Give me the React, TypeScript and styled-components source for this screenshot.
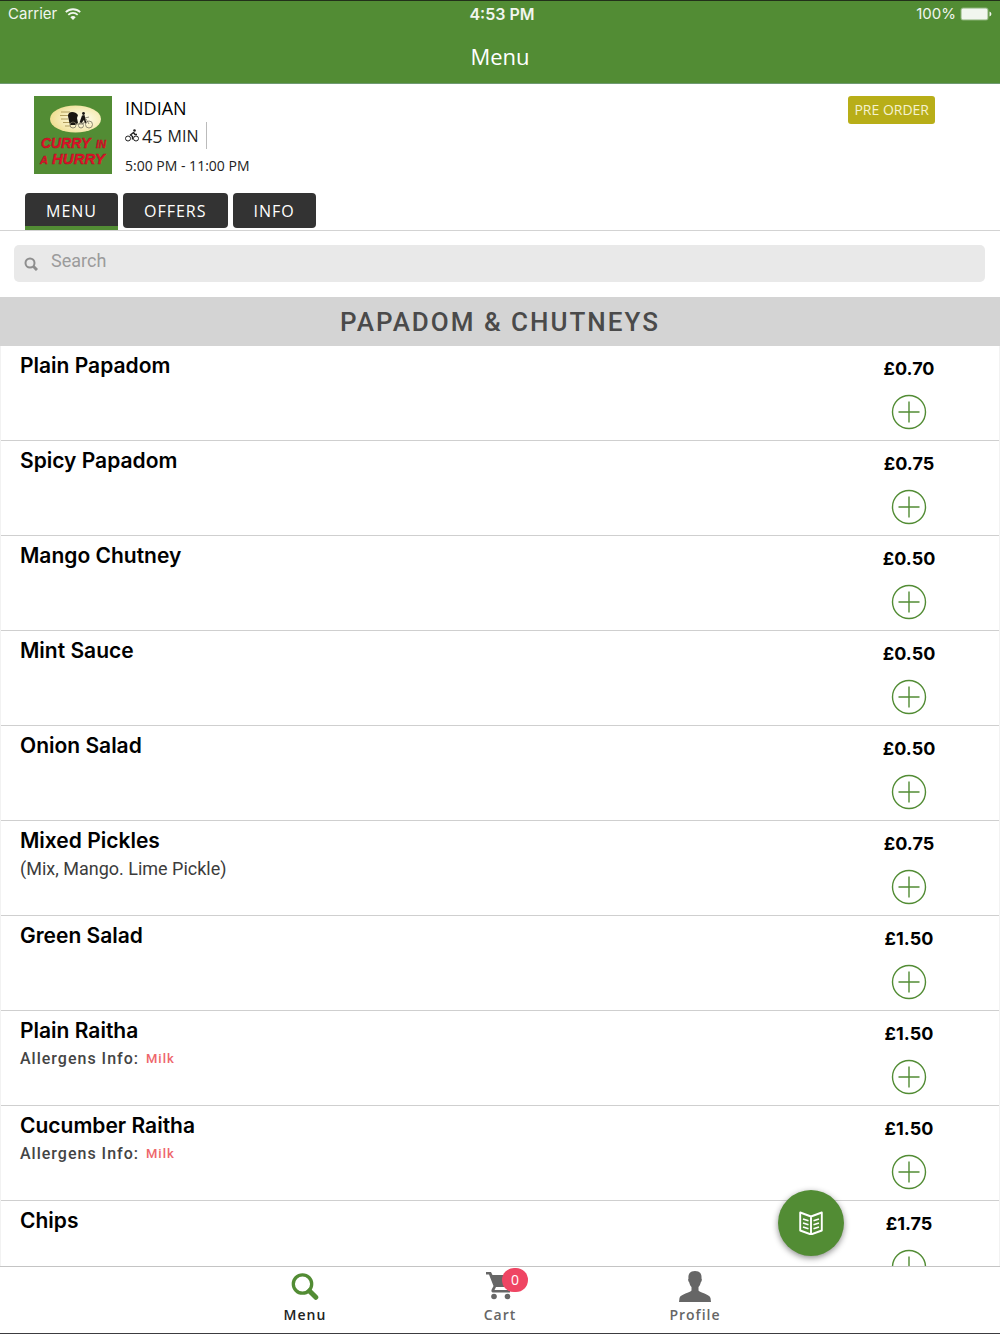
import React, { useState } from "react";
import styled, { createGlobalStyle } from "styled-components";

const green = "#528c34";
const openSans = '"Open Sans", "Noto Sans", sans-serif';
const inter = 'Inter, "Liberation Sans", sans-serif';
const roboto = 'Roboto, "Liberation Sans", sans-serif';

const GlobalStyle = createGlobalStyle`
  *, *::before, *::after { box-sizing: border-box; }
  body { margin: 0; background: #fff; color: #000; font-family: ${openSans}; }
  button, input { font: inherit; }
  h1, h2, h3, p, ul { margin: 0; padding: 0; }
`;

const Screen = styled.div`
  display: flex;
  flex-direction: column;
  height: 100vh;
  border-top: 1px solid #22301a;
  border-bottom: 1px solid #3c3c40;
`;

const TopBar = styled.header`
  flex: none;
  background: ${green};
  color: #fff;
  border-bottom: 1px solid #6f9a72;
`;

const StatusBar = styled.div`
  display: grid;
  grid-template-columns: 1fr auto 1fr;
  align-items: center;
  height: 26px;
  padding: 0 8px;
  font-family: ${inter};
  font-size: 15px;
  line-height: 20px;
  opacity: 0.92;
`;

const StatusSide = styled.div<{ $end?: boolean }>`
  display: flex;
  align-items: center;
  justify-content: ${(p) => (p.$end ? "flex-end" : "flex-start")};
  gap: ${(p) => (p.$end ? "4px" : "8px")};
`;

const Clock = styled.div`
  font-size: 16px;
  font-weight: 600;
  padding-left: 4px;
`;

const Title = styled.h1`
  height: 56px;
  padding-top: 14px;
  font-size: 22px;
  font-weight: 400;
  line-height: 30px;
  text-align: center;
`;

const Restaurant = styled.section`
  flex: none;
  display: flex;
  align-items: flex-start;
  padding: 12px 65px 0 34px;
`;

const Logo = styled.svg`
  flex: none;
  width: 78px;
  height: 78px;
  margin-right: 13px;
`;

const Details = styled.div`
  flex: 1;
  font-size: 14px;
  line-height: 20px;
  color: #222;
`;

const Cuisine = styled.h2`
  margin-bottom: 2px;
  font-size: 18px;
  font-weight: 400;
  line-height: 24px;
  color: #000;
`;

const Delivery = styled.p`
  display: flex;
  align-items: center;
  width: fit-content;
  height: 27px;
  padding-right: 7px;
  margin-bottom: 7px;
  border-right: 1px solid #bbb;
  font-size: 16px;
  line-height: 24px;
  gap: 5px;

  b {
    font-size: 18px;
    font-weight: 400;
  }
  svg {
    margin-right: -2px;
  }
`;

const PreOrder = styled.span`
  padding: 4px 6px;
  border-radius: 3px;
  background: #b8ae18;
  color: #f5f2cf;
  font-size: 14px;
  line-height: 20px;
`;

const Tabs = styled.nav`
  flex: none;
  display: flex;
  align-items: flex-start;
  gap: 5px;
  height: 55px;
  padding: 17px 25px 0;
  border-bottom: 1px solid #d3d3d3;
`;

const Tab = styled.button<{ $active: boolean }>`
  display: flex;
  height: ${(p) => (p.$active ? "37px" : "35px")};
  padding: 0 21px;
  border: 0;
  border-radius: ${(p) => (p.$active ? "4px 4px 0 0" : "4px")};
  background: #333;
  box-shadow: ${(p) => (p.$active ? `inset 0 -4px ${green}` : "none")};
  color: #fff;
  font-size: 16px;
  line-height: 36px;
  letter-spacing: 1px;
`;

const SearchBox = styled.label`
  flex: none;
  display: flex;
  align-items: center;
  gap: 13px;
  height: 37px;
  margin: 14px 15px 15px 14px;
  padding: 0 10px;
  border-radius: 5px;
  background: #e9e9e9;
`;

const SearchInput = styled.input`
  flex: 1;
  height: 32px;
  padding: 0 0 6px;
  border: 0;
  outline: 0;
  background: transparent;
  font-family: ${roboto};
  font-size: 18px;
  &::placeholder { color: #9b9b9b; opacity: 1; }
`;

const Section = styled.section`
  flex: 1;
  min-height: 0;
  overflow-y: auto;
  scrollbar-width: none;
`;

const SectionTitle = styled.h2`
  height: 49px;
  background: #d4d4d4;
  color: #4a4a4a;
  font-family: ${roboto};
  font-size: 26px;
  font-weight: 500;
  line-height: 50px;
  letter-spacing: 2px;
  text-align: center;
`;

const Items = styled.ul`
  list-style: none;
  border-left: 1px solid #f2f2f2;
  border-right: 1px solid #f2f2f2;
`;

const Item = styled.li`
  display: flex;
  justify-content: space-between;
  height: 95px;
  padding: 0 50px 0 19px;
  border-bottom: 1px solid #cfcfcf;
`;

const ItemInfo = styled.div`
  padding-top: 7px;
`;

const ItemName = styled.h3`
  font-family: ${inter};
  font-size: 21px;
  font-weight: 600;
  line-height: 26px;
`;

const Description = styled.p`
  color: #3c3c3c;
  font-family: ${roboto};
  font-size: 18px;
  line-height: 30px;
`;

const Allergens = styled.p`
  display: flex;
  gap: 7px;
  color: #444;
  font-family: ${roboto};
  font-size: 16px;
  font-weight: 500;
  line-height: 30px;
  letter-spacing: 1px;
`;

const Allergen = styled.span`
  color: #ee666b;
  font-size: 13px;
`;

const Purchase = styled.div`
  display: flex;
  flex-direction: column;
  align-items: center;
  width: 80px;
  padding-top: 11px;
  font-family: ${inter};
  font-size: 18px;
  font-weight: 700;
  line-height: 24px;
`;

const AddButton = styled.button`
  display: flex;
  margin-top: 13px;
  padding: 0;
  border: 0;
  background: none;
  color: ${green};
`;

const Bottom = styled.footer`
  position: relative;
  flex: none;
  height: 67px;
  border-top: 1px solid #c4c4c4;
  background: #fff;
`;

const BottomNav = styled.nav`
  display: flex;
  justify-content: center;
  gap: 110px;
`;

const NavItem = styled.a<{ $active?: boolean }>`
  display: flex;
  flex-direction: column;
  align-items: center;
  width: 85px;
  padding-top: 4px;
  color: ${(p) => (p.$active ? "#222" : "#666")};
  font-size: 14px;
  font-weight: 600;
  line-height: 20px;
  letter-spacing: 1px;
  text-decoration: none;
`;

const NavIcon = styled.span<{ $active?: boolean }>`
  position: relative;
  display: flex;
  height: 34px;
  color: ${(p) => (p.$active ? green : "#666")};
`;

const Badge = styled.span`
  position: absolute;
  top: -3px;
  left: 17px;
  min-width: 26px;
  border-radius: 12px;
  background: #ef4563;
  color: #fff;
  font-weight: 400;
  line-height: 24px;
  letter-spacing: 0;
  text-align: center;
`;

const MenuFab = styled.button`
  position: absolute;
  right: 156px;
  bottom: 77px;
  display: flex;
  align-items: center;
  justify-content: center;
  width: 66px;
  height: 66px;
  padding: 0;
  border: 0;
  border-radius: 50%;
  background: ${green};
  color: #fff;
  box-shadow: 0 2px 6px rgba(0, 0, 0, 0.45);
`;

function CurryLogo() {
  return (
    <Logo viewBox="0 0 78 78" role="img" aria-label="Curry in a Hurry">
      <defs>
        <radialGradient id="plate" cx="0.62" cy="0.5" r="0.6">
          <stop offset="0" stopColor="#fffef2" />
          <stop offset="0.55" stopColor="#f8efc0" />
          <stop offset="1" stopColor="#efdf94" />
        </radialGradient>
      </defs>
      <rect width="78" height="78" fill={green} />
      <ellipse cx="41.500" cy="23" rx="25.500" ry="13.500" fill="url(#plate)" />
      <path d="M27 16h9M26 19.500h9M27 23h7M29 26.500h7M31 30h6" stroke="#a08a48" strokeWidth="0.800" />
      <g fill="#1a1712">
        <path d="M34 20c0-4 4-5 8-3l2 2-1 3 1 5-3 2h-5l-1-4z" />
        <circle cx="49.500" cy="17.500" r="1.400" />
        <path d="M48 19.500l2.500-.5 1 4 1 4-1.500.5-1.500-3.500-1.500 3-2.500-.5z" />
      </g>
      <g fill="none" stroke="#77725f" strokeWidth="0.800">
        <circle cx="39" cy="29" r="3" />
        <circle cx="47" cy="29.500" r="2.500" />
        <circle cx="55" cy="28.500" r="3.500" />
        <path d="M42 28h7l3-5 3 5M51 22l4-1" />
      </g>
      <g
        fill="#e8102c"
        stroke="#a8141c"
        strokeWidth="0.500"
        fontFamily='"Liberation Sans", Arial, sans-serif'
        fontWeight="700"
        fontStyle="italic"
      >
        <text x="7" y="52" fontSize="14">CURRY</text>
        <text x="62" y="52" fontSize="10">IN</text>
        <text x="6" y="68" fontSize="11">A</text>
        <text x="18" y="68" fontSize="15">HURRY</text>
      </g>
    </Logo>
  );
}

const WifiIcon = () => (
  <svg width="16" height="12" viewBox="0 0 16 12" fill="none" stroke="currentColor" strokeWidth="1.800" aria-hidden="true">
    <path d="M0.800 4.200a10.300 10.300 0 0 1 14.400 0M3.300 6.900a6.700 6.700 0 0 1 9.400 0" />
    <path d="M8 12L5.300 9.200a3.900 3.900 0 0 1 5.400 0z" fill="currentColor" stroke="none" />
  </svg>
);

const BatteryIcon = () => (
  <svg width="32" height="14" viewBox="0 0 32 14" aria-hidden="true">
    <rect x="0.500" y="0.500" width="28" height="13" rx="2.500" fill="#8fb57c" />
    <rect x="1.500" y="1.500" width="26" height="11" rx="1.500" fill="#fff" />
    <path d="M29.500 4.500c2.500 1 2.500 4 0 5z" fill="#fff" />
  </svg>
);

const BikeIcon = () => (
  <svg width="14" height="13" viewBox="0 0 14 13" fill="none" stroke="#222" aria-hidden="true">
    <circle cx="3" cy="9.500" r="2.500" />
    <circle cx="11" cy="9.500" r="2.500" />
    <path d="M8.500 3.500L5.500 6l2 1.500v3M8.500 3.500l1.500 2h2" strokeWidth="1.400" />
    <circle cx="9.500" cy="1.500" r="1.300" fill="#222" stroke="none" />
  </svg>
);

const MagnifierIcon = () => (
  <svg width="28" height="30" viewBox="0 -2 28 30" fill="none" stroke="currentColor" aria-hidden="true">
    <circle cx="11.500" cy="11" r="9.200" strokeWidth="3.300" />
    <path d="M18.500 18l6.300 6.300" strokeWidth="5" strokeLinecap="round" />
  </svg>
);

const PlusCircle = () => (
  <svg width="36" height="36" viewBox="0 0 36 36" fill="none" stroke="currentColor" strokeWidth="1.400" aria-hidden="true">
    <circle cx="18" cy="18" r="16.500" />
    <path d="M18 7.500v21M7.500 18h21" />
  </svg>
);

const CartIcon = () => (
  <svg width="30" height="30" viewBox="0 0 30 30" fill="currentColor" aria-hidden="true">
    <path d="M1 1h5l1.500 3H26v7l-3 5H11l-1.500 3H25v2.500H8.500C6.500 21.500 6 20 6.700 18.500L8.500 15 4 3.500H1z" />
    <circle cx="9" cy="25.500" r="2.800" />
    <circle cx="22.500" cy="25.500" r="2.800" />
  </svg>
);

const ProfileIcon = () => (
  <svg width="32" height="31" viewBox="0 0 32 31" fill="currentColor" aria-hidden="true">
    <path d="M16 0c-5 0-7 3-6.500 7.500-.8.500-.3 3 .8 4 .4 2 1.300 3.500 2.200 4.500v3.500c-1 2-11 3.500-12 7.500L0 31h32l-.5-4c-1-4-11-5.500-12-7.500V16c.9-1 1.800-2.500 2.200-4.500 1.100-1 1.600-3.500.8-4C23 3 21 0 16 0z" />
  </svg>
);

const BookIcon = () => (
  <svg width="24" height="24" viewBox="0 0 24 24" fill="none" stroke="currentColor" strokeWidth="1.900" strokeLinejoin="round" aria-hidden="true">
    <path d="M12 5.500L1.200 1.500v18L12 23.500l10.800-4v-18zM12 5.500v18" />
    <path d="M4 8l5.500 1.800M4 12l5.500 1.800M4 16l5.500 1.800M20 8l-5.500 1.800M20 12l-5.500 1.800M20 16l-5.500 1.800" strokeWidth="1.600" />
  </svg>
);

type MenuItem = { name: string; price: string; note?: string; allergen?: string };

const items: MenuItem[] = [
  { name: "Plain Papadom", price: "£0.70" },
  { name: "Spicy Papadom", price: "£0.75" },
  { name: "Mango Chutney", price: "£0.50" },
  { name: "Mint Sauce", price: "£0.50" },
  { name: "Onion Salad", price: "£0.50" },
  { name: "Mixed Pickles", price: "£0.75", note: "(Mix, Mango. Lime Pickle)" },
  { name: "Green Salad", price: "£1.50" },
  { name: "Plain Raitha", price: "£1.50", allergen: "Milk" },
  { name: "Cucumber Raitha", price: "£1.50", allergen: "Milk" },
  { name: "Chips", price: "£1.75" },
];

const tabs = ["MENU", "OFFERS", "INFO"];

export default function App() {
  const [tab, setTab] = useState("MENU");
  return (
    <Screen>
      <GlobalStyle />
      <TopBar>
        <StatusBar>
          <StatusSide>
            Carrier <WifiIcon />
          </StatusSide>
          <Clock>4:53 PM</Clock>
          <StatusSide $end>
            100% <BatteryIcon />
          </StatusSide>
        </StatusBar>
        <Title>Menu</Title>
      </TopBar>
      <Restaurant>
        <CurryLogo />
        <Details>
          <Cuisine>INDIAN</Cuisine>
          <Delivery>
            <BikeIcon />
            <b>45</b> MIN
          </Delivery>
          <p>5:00 PM - 11:00 PM</p>
        </Details>
        <PreOrder>PRE ORDER</PreOrder>
      </Restaurant>
      <Tabs>
        {tabs.map((t) => (
          <Tab key={t} $active={t === tab} onClick={() => setTab(t)}>
            {t}
          </Tab>
        ))}
      </Tabs>
      <SearchBox>
        <svg width="14" height="14" viewBox="0 0 14 14" fill="none" stroke="#8e8e8e" strokeWidth="2" aria-hidden="true">
          <circle cx="6" cy="6" r="4.500" />
          <path d="M9.300 9.300l3.700 3.700" strokeWidth="3" />
        </svg>
        <SearchInput type="search" placeholder="Search" aria-label="Search" />
      </SearchBox>
      <Section>
        <SectionTitle>PAPADOM &amp; CHUTNEYS</SectionTitle>
        <Items>
          {items.map((item) => (
            <Item key={item.name}>
              <ItemInfo>
                <ItemName>{item.name}</ItemName>
                {item.note && <Description>{item.note}</Description>}
                {item.allergen && (
                  <Allergens>
                    Allergens Info: <Allergen>{item.allergen}</Allergen>
                  </Allergens>
                )}
              </ItemInfo>
              <Purchase>
                {item.price}
                <AddButton aria-label={`Add ${item.name}`}>
                  <PlusCircle />
                </AddButton>
              </Purchase>
            </Item>
          ))}
        </Items>
      </Section>
      <Bottom>
        <BottomNav>
          <NavItem href="#menu" $active>
            <NavIcon $active>
              <MagnifierIcon />
            </NavIcon>
            Menu
          </NavItem>
          <NavItem href="#cart">
            <NavIcon>
              <CartIcon />
              <Badge>0</Badge>
            </NavIcon>
            Cart
          </NavItem>
          <NavItem href="#profile">
            <NavIcon>
              <ProfileIcon />
            </NavIcon>
            Profile
          </NavItem>
        </BottomNav>
        <MenuFab aria-label="Menu sections">
          <BookIcon />
        </MenuFab>
      </Bottom>
    </Screen>
  );
}
